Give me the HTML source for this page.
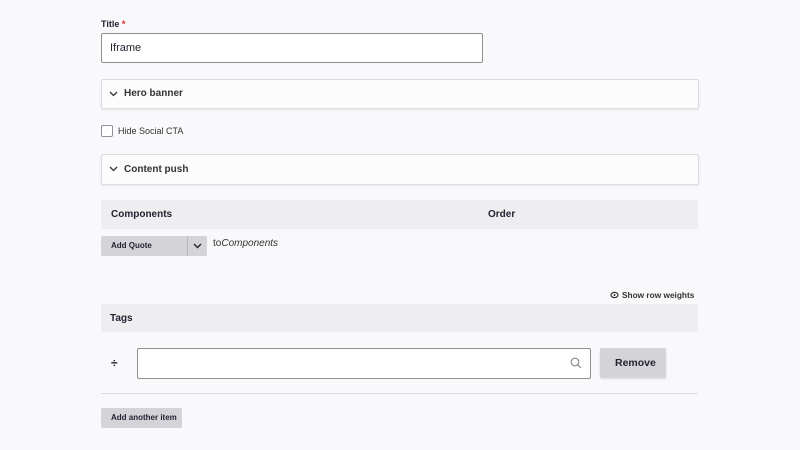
<!DOCTYPE html>
<html><head><style>
body{margin:0;width:800px;height:450px;background:#f9f8fb;font-family:"Liberation Sans",Arial,sans-serif;color:#222330;position:relative;overflow:hidden}
.a{position:absolute}
.b{font-weight:bold}
.box{position:absolute;left:101px;width:596px;background:#fcfcfd;border:1px solid #dcdce2;box-shadow:0 1px 2px rgba(0,0,0,.08);border-radius:2px}
.hd{position:absolute;left:101px;width:597px;background:#eeeef1}
.btn{position:absolute;background:#d4d4d8;border-radius:2px;font-weight:bold;color:#222330}
</style></head><body>
<div class="a b" style="left:101px;top:19px;font-size:9px">Title<span style="color:#d72222"> *</span></div>
<div class="a" style="left:101px;top:33px;width:380px;height:28px;border:1px solid #919191;background:#fff;border-radius:2px"></div>
<div class="a" style="left:110px;top:42px;font-size:11px">Iframe</div>

<div class="box" style="top:79px;height:28px"></div>
<svg class="a" style="left:109px;top:90px" width="9" height="8"><path d="M1 2l3.5 3.5L8 2" fill="none" stroke="#333" stroke-width="1.3"/></svg>
<div class="a b" style="left:124px;top:88px;font-size:10px;color:#333">Hero banner</div>

<div class="a" style="left:101px;top:125px;width:10px;height:10px;border:1px solid #8e929c;border-radius:2px;background:#fff"></div>
<div class="a" style="left:118px;top:126px;font-size:9px;color:#333">Hide Social CTA</div>

<div class="box" style="top:154px;height:29px"></div>
<svg class="a" style="left:109px;top:165px" width="9" height="8"><path d="M1 2l3.5 3.5L8 2" fill="none" stroke="#333" stroke-width="1.3"/></svg>
<div class="a b" style="left:124px;top:164px;font-size:10px;color:#333">Content push</div>

<div class="hd" style="top:200px;height:29px"></div>
<div class="a b" style="left:111px;top:209px;font-size:10px">Components</div>
<div class="a b" style="left:488px;top:209px;font-size:10px">Order</div>

<div class="btn" style="left:101px;top:236px;width:106px;height:20px"></div>
<div class="a" style="left:187px;top:236px;width:1px;height:20px;background:#b8b8bd"></div>
<div class="a b" style="left:111px;top:241px;font-size:8px">Add Quote</div>
<svg class="a" style="left:193px;top:242px" width="9" height="8"><path d="M1 2l3.5 3.5L8 2" fill="none" stroke="#222" stroke-width="1.4"/></svg>
<div class="a" style="left:213px;top:238px;font-size:10px;color:#333">to<i>Components</i></div>

<svg class="a" style="left:610px;top:291px" width="9" height="8"><ellipse cx="4.5" cy="4" rx="3.5" ry="2.6" fill="none" stroke="#333" stroke-width="1.2"/><circle cx="4.5" cy="4" r="1" fill="#333"/></svg>
<div class="a b" style="left:622px;top:290px;font-size:8.3px;color:#333">Show row weights</div>

<div class="hd" style="top:304px;height:28px"></div>
<div class="a b" style="left:110px;top:313px;font-size:10px">Tags</div>

<div class="a" style="left:111px;top:356px;font-size:12px;font-weight:bold">÷</div>
<div class="a" style="left:137px;top:348px;width:452px;height:29px;border:1px solid #919191;background:#fff;border-radius:2px"></div>
<svg class="a" style="left:570px;top:357px" width="12" height="12"><circle cx="5" cy="5" r="3.8" fill="none" stroke="#888" stroke-width="1.1"/><path d="M7.8 7.8L11 11" stroke="#888" stroke-width="1.1"/></svg>
<div class="btn" style="left:600px;top:348px;width:66px;height:30px;box-shadow:0 1px 2px rgba(0,0,0,.12)"></div>
<div class="a b" style="left:615px;top:357px;font-size:10.5px">Remove</div>

<div class="a" style="left:101px;top:393px;width:597px;height:1px;background:#dcdce2"></div>

<div class="btn" style="left:101px;top:408px;width:81px;height:20px"></div>
<div class="a b" style="left:111px;top:413px;font-size:8px">Add another item</div>
</body></html>
